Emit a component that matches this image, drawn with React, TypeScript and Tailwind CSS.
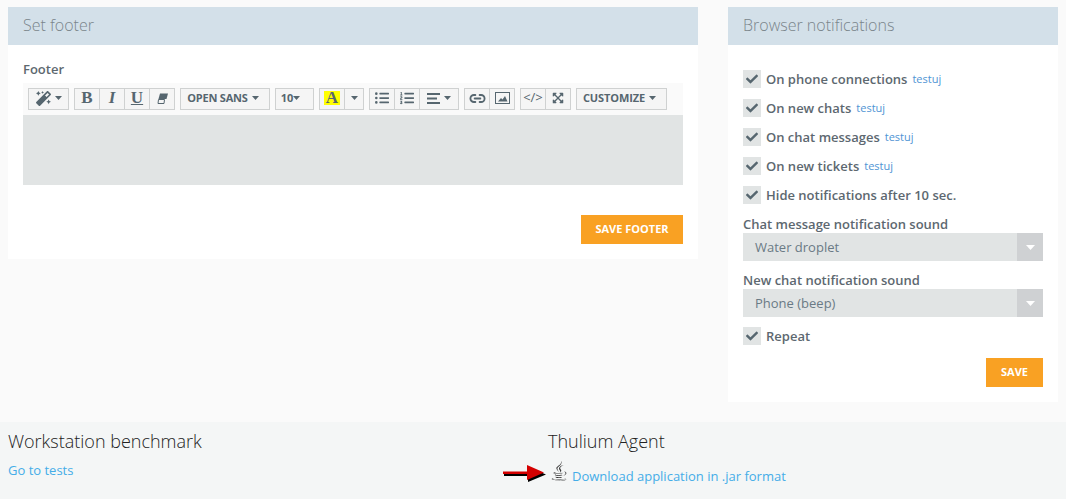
import type { ReactNode } from "react";
import { Link2 } from "lucide-react";
import { FaCheck, FaExpandArrowsAlt, FaJava, FaListOl, FaListUl, FaMagic } from "react-icons/fa";

const Caret = () => (
  <svg width="7" height="4" viewBox="0 0 7 4" className="shrink-0">
    <path d="M0 0h7L3.5 4z" fill="currentColor" />
  </svg>
);

function Btn({ w, children, first }: { w: string; children: ReactNode; first?: boolean }) {
  return (
    <div
      className={`flex h-[22px] items-center justify-center gap-1 border border-[#cfd1d1] bg-[#f5f5f5] pb-[2px] text-[#56666f] ${w} ${
        first ? "" : "-ml-px"
      }`}
    >
      {children}
    </div>
  );
}

function Toolbar() {
  return (
    <div className="flex h-8 items-center gap-[5px] bg-[#fafafa] pl-[5px] text-[11px] font-bold">
      <Btn w="w-[41px]" first>
        <FaMagic size={15} />
        <Caret />
      </Btn>
      <div className="flex font-['Liberation_Serif',serif] text-[17px]">
        <Btn w="w-[26px]" first>
          <span>B</span>
        </Btn>
        <Btn w="w-[26px]">
          <span className="italic">I</span>
        </Btn>
        <Btn w="w-[26px]">
          <span className="underline">U</span>
        </Btn>
        <Btn w="w-[26px]">
          <svg width="11" height="11" viewBox="0 0 11 11">
            <path d="M3 0.500h8L9.500 6H1.500z" fill="currentColor" />
            <path d="M1.500 6.500h6L7 10.500H1z" fill="none" stroke="currentColor" />
          </svg>
        </Btn>
      </div>
      <Btn w="w-[90px]" first>
        <span className="-ml-1 tracking-[-0.2px]">OPEN SANS</span>
        <Caret />
      </Btn>
      <Btn w="w-[39px]" first>
        <span className="-mr-1 -ml-2">10</span>
        <Caret />
      </Btn>
      <div className="flex">
        <Btn w="w-[26px]" first>
          <span className="bg-[#ffff00] px-[2px] font-['Liberation_Serif',serif] text-[17px] leading-[14px] font-bold">
            A
          </span>
        </Btn>
        <Btn w="w-[20px]">
          <Caret />
        </Btn>
      </div>
      <div className="flex">
        <Btn w="w-[26px]" first>
          <FaListUl size={14} />
        </Btn>
        <Btn w="w-[26px]">
          <FaListOl size={14} />
        </Btn>
        <Btn w="w-[40px]">
          <svg width="13" height="11" viewBox="0 0 13 11">
            <path d="M0 0h13v2H0zM0 4.500h10v2H0zM0 9h13v2H0z" fill="currentColor" />
          </svg>
          <Caret />
        </Btn>
      </div>
      <div className="flex">
        <Btn w="w-[26px]" first>
          <Link2 size={17} strokeWidth={2.6} />
        </Btn>
        <Btn w="w-[26px]">
          <svg width="15" height="12" viewBox="0 0 15 12">
            <rect x="0.500" y="0.500" width="14" height="11" fill="none" stroke="currentColor" />
            <path d="M3 9.500l3-3.500 1.500 1.500L10 4l2.500 5.500z" fill="currentColor" />
          </svg>
        </Btn>
      </div>
      <div className="flex">
        <Btn w="w-[26px]" first>
          <span className="text-[13px] font-medium">&lt;/&gt;</span>
        </Btn>
        <Btn w="w-[26px]">
          <FaExpandArrowsAlt size={12} />
        </Btn>
      </div>
      <Btn w="w-[91px]" first>
        <span className="-ml-1 tracking-[-0.1px]">CUSTOMIZE</span>
        <Caret />
      </Btn>
    </div>
  );
}

function PanelHeader({ title }: { title: string }) {
  return (
    <div className="flex h-[38px] items-center bg-[#d3e0e9] px-[15px] pb-[2px] text-[16px] font-light text-[#7a858b]">
      {title}
    </div>
  );
}

function Check({ label, test, className }: { label: string; test?: boolean; className?: string }) {
  return (
    <div className={`flex h-[18px] items-center ${className ?? ""}`}>
      <span className="mr-[5px] flex h-[18px] w-[18px] items-center justify-center bg-[#e1e4e4] text-[#56666f]">
        <FaCheck size={12} />
      </span>
      <span className="pt-[2px] text-[13px] font-semibold text-[#5d6870]">{label}</span>
      {test && <span className="ml-[5px] text-[11px] text-[#4f94d4]">testuj</span>}
    </div>
  );
}

function SoundSelect({ label, value }: { label: string; value: string }) {
  return (
    <div>
      <div className="flex h-[18px] items-center pt-[2px] text-[13px] font-semibold text-[#5d6870]">{label}</div>
      <div className="flex h-7 items-center bg-[#e1e4e4]">
        <span className="flex-1 pt-[2px] pl-3 text-[13px] text-[#6a7a85]">{value}</span>
        <span className="flex h-full w-[26px] items-center justify-center bg-[#cfd1d3] text-white">
          <svg width="9" height="5" viewBox="0 0 9 5">
            <path d="M0 0h9L4.500 5z" fill="currentColor" />
          </svg>
        </span>
      </div>
    </div>
  );
}

export default function App() {
  return (
    <div className="flex h-[499px] w-[1066px] flex-col overflow-hidden bg-[#fafafa] font-['Open_Sans',sans-serif]">
      <div className="flex items-start gap-[30px] pt-[7px] pl-2">
        <section className="w-[690px] bg-white">
          <PanelHeader title="Set footer" />
          <div className="p-[15px]">
            <div className="flex h-[18px] items-center pt-[2px] text-[13px] font-semibold text-[#5d6870]">Footer</div>
            <div className="mt-[5px]">
              <Toolbar />
              <div className="h-[70px] bg-[#e1e4e4]" />
            </div>
            <div className="mt-[30px] flex justify-end">
              <button className="h-[29px] w-[102px] bg-[#f9a123] text-[11px] font-bold text-white">SAVE FOOTER</button>
            </div>
          </div>
        </section>
        <section className="h-[395px] w-[330px] bg-white">
          <PanelHeader title="Browser notifications" />
          <div className="px-[15px] pt-[25px]">
            <div className="flex flex-col gap-[11px]">
              <Check label="On phone connections" test />
              <Check label="On new chats" test />
              <Check label="On chat messages" test />
              <Check label="On new tickets" test />
              <Check label="Hide notifications after 10 sec." />
            </div>
            <div className="mt-[11px] flex flex-col gap-[10px]">
              <SoundSelect label="Chat message notification sound" value="Water droplet" />
              <SoundSelect label="New chat notification sound" value="Phone (beep)" />
            </div>
            <Check label="Repeat" className="mt-[10px]" />
            <div className="mt-[13px] flex justify-end">
              <button className="h-[29px] w-[57px] bg-[#f9a123] text-[11px] font-bold text-white">SAVE</button>
            </div>
          </div>
        </section>
      </div>
      <div className="mt-5 flex flex-1 bg-[#f4f6f6] pl-2">
        <div className="w-[540px] pt-[7px]">
          <div className="text-[18px] leading-[24px] font-light text-[#222]">Workstation benchmark</div>
          <div className="mt-[8px] text-[13px] leading-[18px] text-[#45ade8]">Go to tests</div>
        </div>
        <div className="relative pt-[7px]">
          <div className="text-[18px] leading-[24px] font-light text-[#222]">Thulium Agent</div>
          <svg width="44" height="18" viewBox="0 0 44 18" className="absolute top-[43px] -left-[45px]">
            <path d="M1 8h24V2l18 7.500-18 7.500v-6H1z" fill="#000" />
            <path d="M0 6.500h24V0l17 7.500L24 15V9H0z" fill="#d40000" />
          </svg>
          <div className="mt-[14px] flex h-5 items-center">
            <FaJava size={20} className="-mt-[12px] ml-[1px] text-[#333]" />
            <span className="ml-[3px] text-[13px] text-[#45ade8]">Download application in .jar format</span>
          </div>
        </div>
      </div>
    </div>
  );
}
